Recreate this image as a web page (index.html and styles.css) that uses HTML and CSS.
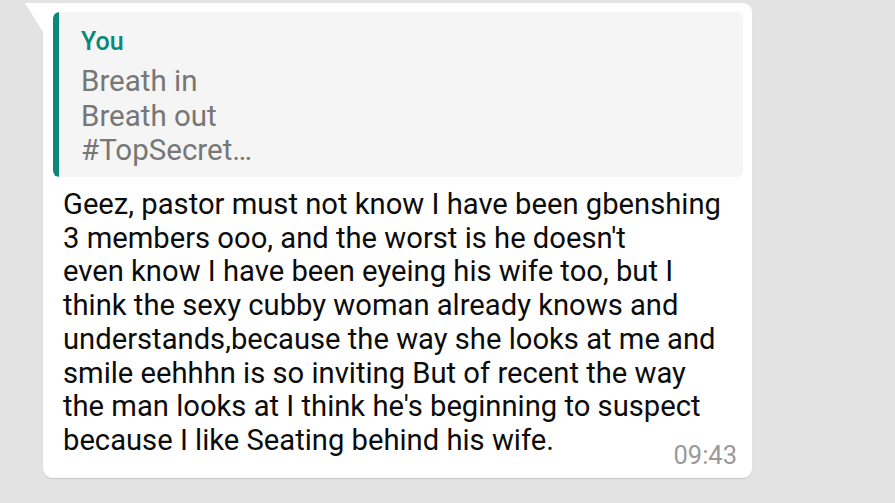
FILE: index.html
```html
<!DOCTYPE html>
<html>
<head>
<meta charset="utf-8">
<link rel="stylesheet" href="styles.css">
</head>
<body>
<div class="page">
  <div class="bubble">
    <div class="quote">
      <div class="quote-bar"></div>
      <div class="quote-body">
        <div class="quote-author">You</div>
        <div class="quote-text">Breath in<br>Breath out<br>#TopSecret…</div>
      </div>
    </div>
    <div class="message">
      <div class="message-text">Geez, pastor must not know I have been gbenshing<br>3 members ooo, and the worst is he doesn't<br>even know I have been eyeing his wife too, but I<br>think the sexy cubby woman already knows and<br>understands,because the way she looks at me and<br>smile eehhhn is so inviting But of recent the way<br>the man looks at I think he's beginning to suspect<br>because I like Seating behind his wife.</div>
      <div class="message-time">09:43</div>
    </div>
  </div>
</div>
</body>
</html>
```

FILE: styles.css
```css
html, body {
  margin: 0;
  padding: 0;
}
body {
  background: #e3e3e3;
  font-family: Roboto, "Noto Sans", sans-serif;
  width: 895px;
  height: 503px;
  overflow: hidden;
}
.page {
  padding: 3px 0 0 43px;
}
.bubble {
  position: relative;
  width: 709px;
  box-sizing: border-box;
  background: #ffffff;
  border-radius: 0 9px 9px 9px;
  padding: 9px 9px 10px 10px;
  box-shadow: 0 1px 1px rgba(0,0,0,0.13);
}
.bubble::before {
  content: "";
  position: absolute;
  left: -18px;
  top: 0;
  width: 0;
  height: 0;
  border-top: 29px solid #ffffff;
  border-left: 18px solid transparent;
}
.quote {
  display: flex;
  background: #f5f5f5;
  border-radius: 6px;
  height: 165px;
  overflow: hidden;
}
.quote-bar {
  width: 6px;
  background: #0b8877;
  border-radius: 6px 0 0 6px;
}
.quote-body {
  padding: 14px 0 0 22px;
}
.quote-author {
  color: #07887a;
  font-weight: 500;
  font-size: 25px;
  line-height: 32px;
}
.quote-text {
  color: #777777;
  font-size: 29.5px;
  line-height: 34.5px;
  padding-top: 6px;
}
.message {
  display: grid;
  padding: 11px 6px 0 10px;
}
.message-text, .message-time {
  grid-area: 1 / 1;
}
.message-text {
  color: #0c0c0c;
  font-size: 29.2px;
  line-height: 33.7px;
  padding-bottom: 10px;
}
.message-time {
  justify-self: end;
  align-self: end;
  color: #9a9a9a;
  font-size: 25.5px;
  line-height: 26px;
}
```
